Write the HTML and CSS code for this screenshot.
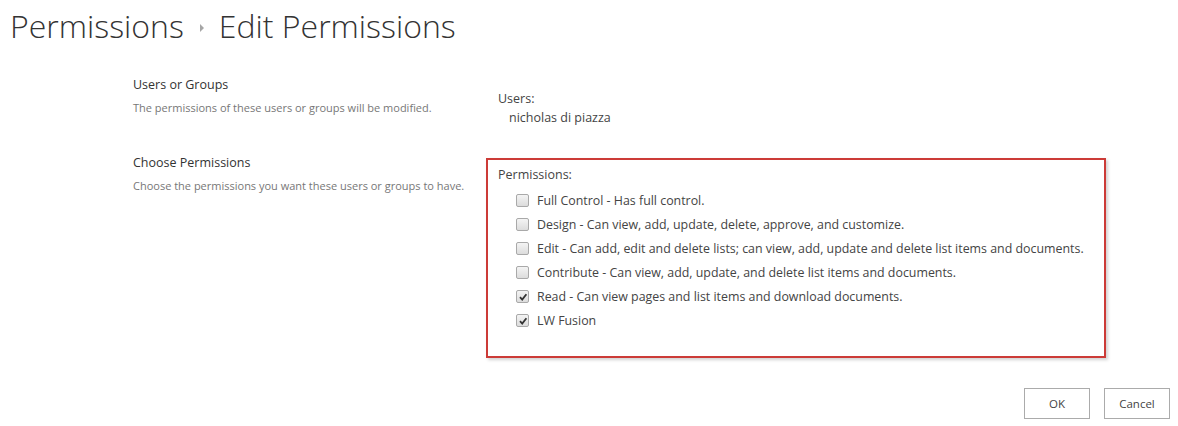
FILE: index.html
```html
<!DOCTYPE html>
<html>
<head>
<meta charset="utf-8">
<link rel="stylesheet" href="styles.css">
</head>
<body>
<h1 class="title"><span>Permissions</span><span class="crumb-arrow"></span><span>Edit Permissions</span></h1>
<div class="form">
  <div class="section">
    <div class="info">
      <div class="label">Users or Groups</div>
      <div class="desc">The permissions of these users or groups will be modified.</div>
    </div>
    <div class="field users">
      <div class="fname">Users:</div>
      <div class="uname">nicholas di piazza</div>
    </div>
  </div>
  <div class="section second">
    <div class="info">
      <div class="label">Choose Permissions</div>
      <div class="desc">Choose the permissions you want these users or groups to have.</div>
    </div>
    <div class="field perms">
      <div class="fname">Permissions:</div>
      <ul class="list">
        <li><span class="cb"></span>Full Control - Has full control.</li>
        <li><span class="cb"></span>Design - Can view, add, update, delete, approve, and customize.</li>
        <li><span class="cb"></span>Edit - Can add, edit and delete lists; can view, add, update and delete list items and documents.</li>
        <li><span class="cb"></span>Contribute - Can view, add, update, and delete list items and documents.</li>
        <li><span class="cb checked"><svg viewBox="0 0 12 12" width="12" height="12"><path d="M3 6.2 L5.2 8.6 L9.4 3.2" fill="none" stroke="#333" stroke-width="1.8"/></svg></span>Read - Can view pages and list items and download documents.</li>
        <li><span class="cb checked"><svg viewBox="0 0 12 12" width="12" height="12"><path d="M3 6.2 L5.2 8.6 L9.4 3.2" fill="none" stroke="#333" stroke-width="1.8"/></svg></span>LW Fusion</li>
      </ul>
    </div>
  </div>
  <div class="buttons">
    <button class="btn">OK</button>
    <button class="btn">Cancel</button>
  </div>
</div>
</body>
</html>
```
FILE: styles.css
```css
html, body {
  margin: 0;
  padding: 0;
  background: #fff;
  font-family: "Open Sans", "Noto Sans", sans-serif;
  color: #444;
}
.title {
  margin: 0;
  padding: 4px 0 0 10px;
  font-weight: 300;
  font-size: 32px;
  line-height: 44px;
  color: #333;
  display: flex;
  align-items: center;
}
.crumb-arrow {
  display: inline-block;
  width: 0;
  height: 0;
  border-top: 4px solid transparent;
  border-bottom: 4px solid transparent;
  border-left: 4px solid #a6a6a6;
  margin: 4px 15px 0 16px;
}
.form {
  padding: 28px 0 0 133px;
}
.section {
  display: flex;
}
.section.second {
  margin-top: 12px;
}
.info {
  width: 353px;
  flex: none;
}
.label {
  font-size: 12.5px;
  line-height: 18px;
  color: #333;
}
.desc {
  font-size: 11px;
  line-height: 16px;
  color: #777;
  margin-top: 6px;
}
.field {
  font-size: 12.5px;
  color: #444;
}
.users {
  padding: 14px 12px;
}
.users .fname {
  line-height: 18px;
}
.uname {
  padding-left: 11px;
  line-height: 20px;
}
.perms {
  width: 596px;
  height: 182px;
  border: 2px solid #cc3b37;
  box-shadow: 2px 2px 3px rgba(0,0,0,0.18);
  margin-top: 4px;
  padding: 6px 10px 8px;
}
.perms .fname {
  line-height: 18px;
  margin-bottom: 4px;
}
.list {
  list-style: none;
  margin: 0;
  padding: 0 0 0 18px;
}
.list li {
  display: flex;
  align-items: center;
  height: 24px;
  font-size: 12.4px;
}
.cb {
  width: 11px;
  height: 11px;
  border: 1px solid #a9a9a9;
  border-radius: 2px;
  background: linear-gradient(#f4f4f4, #dcdcdc);
  margin-right: 8px;
  display: flex;
  align-items: center;
  justify-content: center;
  position: relative;
  flex: none;
}
.cb svg {
  position: absolute;
  left: 0;
  top: 0;
}
.buttons {
  display: flex;
  justify-content: flex-end;
  gap: 14px;
  padding: 30px 8px 0 0;
}
.btn {
  width: 66px;
  height: 31px;
  border: 1px solid #ababab;
  background: #fff;
  font-family: "Open Sans", "Noto Sans", sans-serif;
  font-size: 11.5px;
  color: #444;
  padding: 0;
}
```
